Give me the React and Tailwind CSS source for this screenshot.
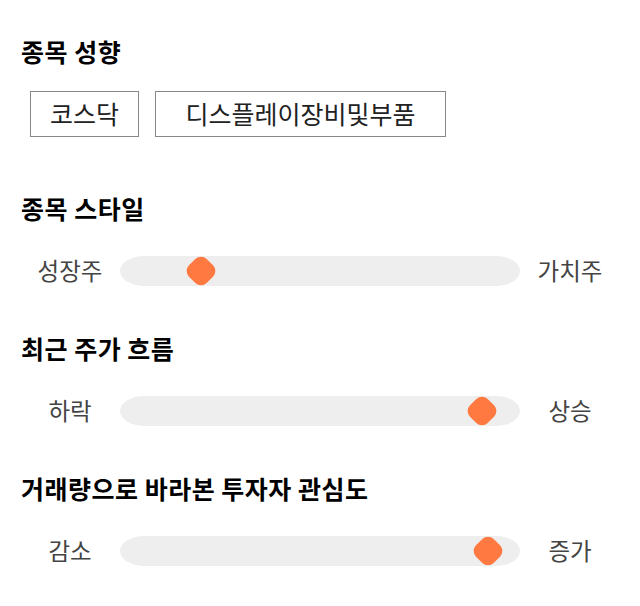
import React from "react";

const font = { fontFamily: '"Noto Sans CJK KR", "Noto Sans", sans-serif' };

function Slider({ left, right, pos }) {
  return (
    <div className="flex h-[46px] items-center">
      <div className="w-[100px] text-center text-[23.5px] text-[#444444]">{left}</div>
      <div className="relative h-[30px] flex-1 rounded-[24px/15px] bg-[#eeeeee]">
        <div
          className="absolute top-1/2 h-[25px] w-[25px] -translate-x-1/2 -translate-y-1/2 rotate-45 rounded-[8px] bg-[#ff7941]"
          style={{ left: pos }}
        />
      </div>
      <div className="w-[100px] text-center text-[23.5px] text-[#444444]">{right}</div>
    </div>
  );
}

function Heading({ children }) {
  return (
    <h2 className="pl-[21px] text-[25px] font-bold leading-8 tracking-[0.5px] text-black">{children}</h2>
  );
}

export default function App() {
  return (
    <div className="h-[606px] w-[640px] bg-white pt-[35px]" style={font}>
      <Heading>종목 성향</Heading>
      <div className="mt-6 flex gap-4 pl-[30px]">
        <div className="flex h-[46px] w-[109px] items-center justify-center border border-[#888888] text-[25px] text-[#222222]">
          코스닥
        </div>
        <div className="flex h-[46px] w-[291px] items-center justify-center border border-[#888888] text-[25px] text-[#222222]">
          디스플레이장비및부품
        </div>
      </div>
      <div className="mt-[55px]">
        <Heading>종목 스타일</Heading>
      </div>
      <div className="mt-6 px-5">
        <Slider left="성장주" right="가치주" pos="20.25%" />
      </div>
      <div className="mt-[38px]">
        <Heading>최근 주가 흐름</Heading>
      </div>
      <div className="mt-6 px-5">
        <Slider left="하락" right="상승" pos="90.6%" />
      </div>
      <div className="mt-[38px]">
        <Heading>거래량으로 바라본 투자자 관심도</Heading>
      </div>
      <div className="mt-6 px-5">
        <Slider left="감소" right="증가" pos="92.1%" />
      </div>
    </div>
  );
}
